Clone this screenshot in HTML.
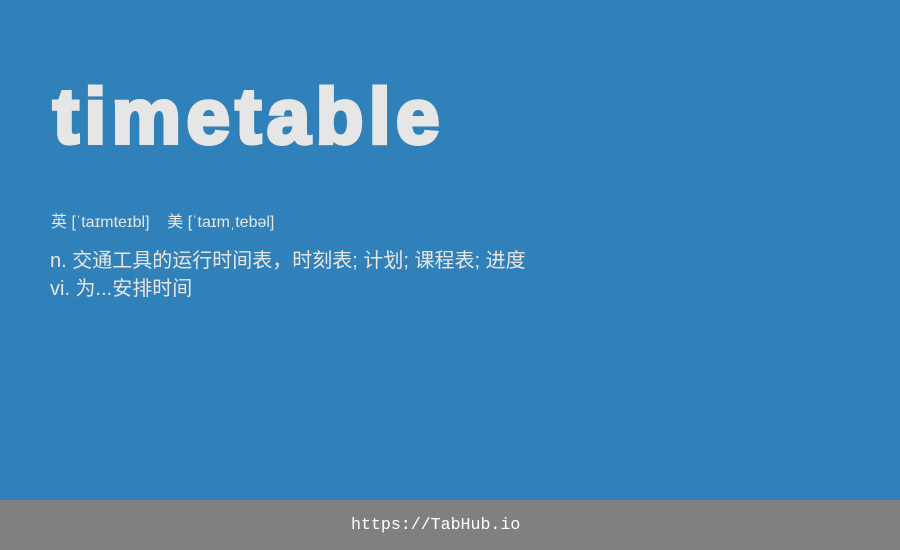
<!DOCTYPE html>
<html><head><meta charset="utf-8"><style>
body{margin:0;width:900px;height:550px;background:#3081b9;position:relative;overflow:hidden;font-family:"Liberation Sans","Noto Sans CJK SC",sans-serif;color:#e6e6e6}
.t{position:absolute;left:53px;top:66px;font-size:78px;font-weight:bold;line-height:100px;color:#e6e6e6;-webkit-text-stroke:4px #e6e6e6;letter-spacing:5.5px}
.p{position:absolute;left:51px;top:213px;font-size:16px;line-height:20px}
.d{position:absolute;left:50px;top:247px;font-size:20px;line-height:28px}
.f{position:absolute;left:351px;top:500px;height:50px;color:#fff;font-family:"Liberation Mono",monospace;font-size:16.6px;line-height:50px}
.fb{position:absolute;left:0;top:500px;width:900px;height:50px;background:#808080}
</style></head><body>
<div class="t">timetable</div>
<div class="p">英 [ˈtaɪmteɪbl]&nbsp;&nbsp;&nbsp; 美 [ˈtaɪmˌtebəl]</div>
<div class="d">n. 交通工具的运行时间表，时刻表; 计划; 课程表; 进度<br>vi. 为...安排时间</div>
<div class="fb"></div>
<div class="f">https://TabHub.io</div>
</body></html>
